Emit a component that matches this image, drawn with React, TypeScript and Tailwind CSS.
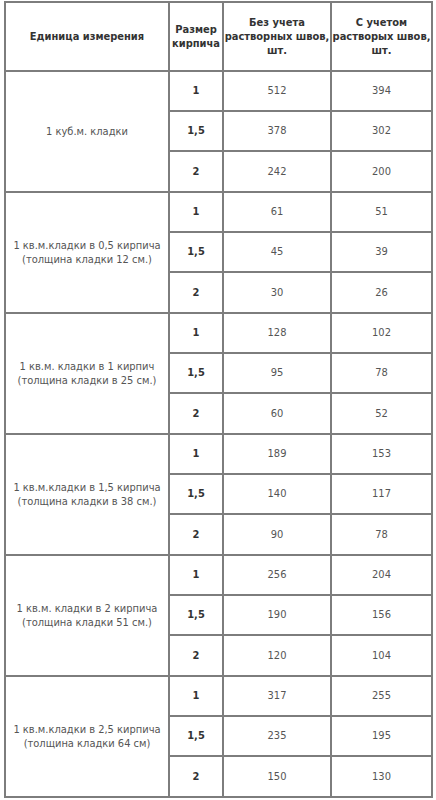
const groups = [
  { label: ['1 куб.м. кладки'], rows: [['512', '394'], ['378', '302'], ['242', '200']] },
  { label: ['1 кв.м.кладки в 0,5 кирпича', '(толщина кладки 12 см.)'], rows: [['61', '51'], ['45', '39'], ['30', '26']] },
  { label: ['1 кв.м. кладки в 1 кирпич', '(толщина кладки в 25 см.)'], rows: [['128', '102'], ['95', '78'], ['60', '52']] },
  { label: ['1 кв.м.кладки в 1,5 кирпича', '(толщина кладки в 38 см.)'], rows: [['189', '153'], ['140', '117'], ['90', '78']] },
  { label: ['1 кв.м. кладки в 2 кирпича', '(толщина кладки 51 см.)'], rows: [['256', '204'], ['190', '156'], ['120', '104']] },
  { label: ['1 кв.м.кладки в 2,5 кирпича', '(толщина кладки 64 см)'], rows: [['317', '255'], ['235', '195'], ['150', '130']] },
]

const sizes = ['1', '1,5', '2']
const rowH = ['h-[40px]', 'h-[40px]', 'h-[41px]']

export default function App() {
  return (
    <div className="min-h-[800px] bg-white pl-[4px] pt-[1px] font-['DejaVu_Sans_Condensed','Liberation_Sans',sans-serif] text-[11px] leading-[14px]">
      <table className="w-[427px] table-fixed border-collapse border-2 border-[#7d7d7d] text-center">
        <colgroup>
          <col className="w-[164px]" />
          <col className="w-[54px]" />
          <col className="w-[108px]" />
          <col className="w-[101px]" />
        </colgroup>
        <thead>
          <tr className="h-[69px] font-bold text-[#333]">
            <th className="border-2 border-[#7d7d7d] px-1">Единица измерения</th>
            <th className="border-2 border-[#7d7d7d] px-0">Размер кирпича</th>
            <th className="border-2 border-[#7d7d7d] px-0">
              Без учета
              <br />
              растворных швов,
              <br />
              шт.
            </th>
            <th className="border-2 border-[#7d7d7d] px-0">
              С учетом
              <br />
              растворых швов,
              <br />
              шт.
            </th>
          </tr>
        </thead>
        <tbody className="text-[#555]">
          {groups.map((g, gi) =>
            g.rows.map((r, ri) => (
              <tr key={`${gi}-${ri}`} className={rowH[ri]}>
                {ri === 0 && (
                  <td rowSpan={3} className="border-2 border-[#7d7d7d] px-1">
                    {g.label.map((l, li) => (
                      <div key={li}>{l}</div>
                    ))}
                  </td>
                )}
                <td className="border-2 border-[#7d7d7d] font-bold text-[#333]">{sizes[ri]}</td>
                <td className="border-2 border-[#7d7d7d]">{r[0]}</td>
                <td className="border-2 border-[#7d7d7d]">{r[1]}</td>
              </tr>
            ))
          )}
        </tbody>
      </table>
    </div>
  )
}
